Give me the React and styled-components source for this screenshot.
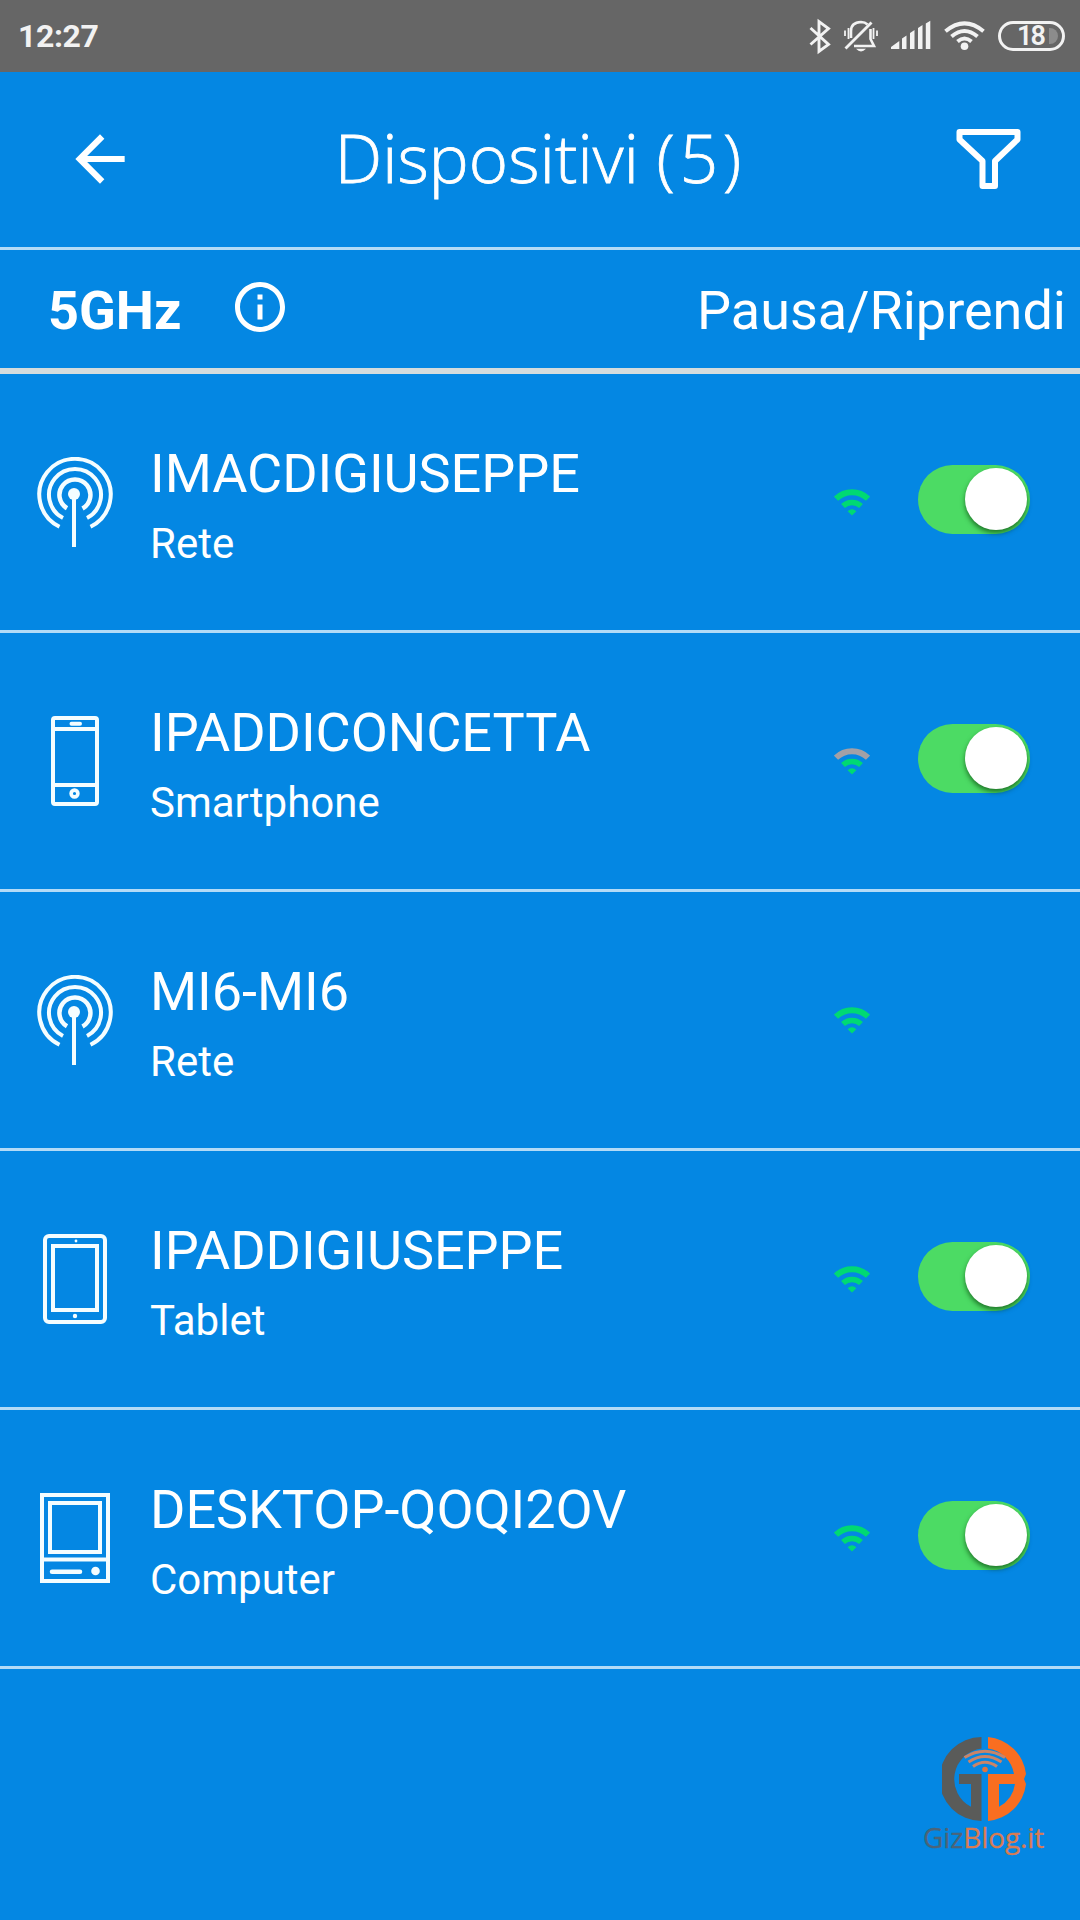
import React from "react";
import styled, { createGlobalStyle } from "styled-components";

const Global = createGlobalStyle`
  * { box-sizing: border-box; }
  body { margin: 0; background: #0487e3; }
`;

const Screen = styled.div`
  position: relative;
  width: 1080px;
  height: 1920px;
  overflow: hidden;
  background: #0487e3;
  color: #fff;
  font-family: Roboto, "Liberation Sans", sans-serif;
`;

const StatusBar = styled.div`
  display: flex;
  align-items: center;
  height: 72px;
  padding: 0 15px 0 18px;
  background: #666;
  color: #f2f2f2;
`;

const Clock = styled.span`
  font-size: 32px;
  font-weight: 700;
  line-height: 38px;
  letter-spacing: -0.4px;
  flex: 1;
`;

const StatusIcon = styled.svg`
  display: block;
  flex: none;
  width: ${(p) => p.$w}px;
  height: 72px;
  margin-right: ${(p) => p.$gap || 0}px;
`;

const Battery = styled.div`
  display: flex;
  align-items: center;
  width: 67px;
  height: 30px;
  margin-bottom: 1px;
  padding: 0 4px 0 16px;
  border: 3px solid #f2f2f2;
  border-radius: 15px;
`;

const BatteryLevel = styled.span`
  flex: 1;
  font-size: 27px;
  font-weight: 600;
  line-height: 24px;
  letter-spacing: -2px;
`;

const BatteryRest = styled.span`
  width: 9px;
  height: 16px;
  border-radius: 0 8px 8px 0;
  background: #8c8c8c;
`;

const Header = styled.header`
  display: flex;
  align-items: flex-start;
  justify-content: space-between;
  height: 178px;
  padding: 50px 58px 0 63px;
  border-bottom: 3px solid #b3dbf7;
`;

const HeaderIcon = styled.svg`
  display: block;
  width: 74px;
  height: 74px;
`;

const Title = styled.h1`
  margin: -7px 4px 0 0;
  font-family: "Open Sans", "Noto Sans", sans-serif;
  font-size: 67px;
  font-weight: 300;
  line-height: 84px;
  letter-spacing: 0.15px;
  white-space: nowrap;
  -webkit-text-stroke: 0.8px #fff;
`;

const Count = styled.span`
  letter-spacing: 5px;
`;

const Band = styled.div`
  display: flex;
  align-items: center;
  height: 124px;
  padding: 3px 14px 0 48px;
  border-bottom: 6px solid #d5dcdd;
  font-size: 54px;
  line-height: 64px;
`;

const BandName = styled.span`
  font-weight: 700;
  width: 182px;
`;

const InfoIcon = styled.svg`
  display: block;
  width: 60px;
  height: 60px;
  margin-bottom: 7px;
`;

const BandAction = styled.span`
  margin-left: auto;
`;

const List = styled.ul`
  margin: 0;
  padding: 0;
  list-style: none;
`;

const Row = styled.li`
  display: flex;
  align-items: flex-start;
  height: 259px;
  padding: 67px 50px 0 30px;
  border-bottom: 3px solid #b3dbf7;
`;

const DeviceIcon = styled.svg`
  display: block;
  flex: none;
  width: 90px;
  height: 90px;
  margin: 16px 30px 0 0;
  fill: none;
  stroke: #f4fdff;
  stroke-width: 4;
`;

const DeviceText = styled.div`
  flex: 1;
  padding-top: 1px;
`;

const DeviceName = styled.div`
  font-size: 54px;
  line-height: 64px;
  letter-spacing: -0.05px;
`;

const DeviceKind = styled.div`
  margin-top: 13px;
  font-size: 42px;
  line-height: 50px;
`;

const Signal = styled.svg`
  display: block;
  width: 36px;
  height: 27px;
  margin: 48px 48px 0 0;
  fill: none;
  stroke: #00d973;
  stroke-width: 6;
`;

const Toggle = styled.div`
  display: flex;
  justify-content: flex-end;
  width: 112px;
  height: 69px;
  margin-top: 24px;
  padding: 3px;
  border-radius: 35px;
  background: ${(p) => (p.$on ? "#4cdb64" : "transparent")};
`;

const Knob = styled.div`
  width: 62px;
  height: 62px;
  border-radius: 50%;
  background: #fff;
  box-shadow: 0 3px 5px rgba(0, 50, 0, 0.6);
`;

const Watermark = styled.div`
  position: absolute;
  left: 923px;
  top: 1736px;
  width: 126px;
`;

const WatermarkLogo = styled.svg`
  display: block;
  width: 86px;
  height: 86px;
  margin-left: 19px;
`;

const WatermarkText = styled.div`
  margin-top: -4px;
  font-family: "Open Sans", "Noto Sans", sans-serif;
  font-size: 28px;
  line-height: 38px;
  letter-spacing: -0.1px;
  color: #d97b52;
  white-space: nowrap;
  -webkit-text-stroke: 0.3px currentColor;
`;

const Grey = styled.span`
  color: #4c6478;
`;

const icons = {
  network: (
    <>
      <path d="M29.5 69.7A35.7 35.7 0 1 1 60.5 69.7" />
      <path d="M33 61A26 26 0 1 1 57 61" />
      <path d="M37 51.3A15.5 15.5 0 1 1 52.5 51.5" strokeWidth="4.5" />
      <circle cx="44" cy="37" r="6" fill="#f4fdff" stroke="none" />
      <path d="M44 37V90" />
    </>
  ),
  phone: (
    <>
      <rect x="23" y="2" width="44" height="86" rx="2" />
      <path d="M23 13H67M23 69H67" />
      <path d="M41.5 7.8H50" strokeLinecap="round" />
      <circle cx="44.5" cy="77.5" r="3.4" strokeWidth="3.6" />
    </>
  ),
  tablet: (
    <>
      <rect x="15" y="2" width="60" height="86" rx="4" />
      <rect x="23" y="12" width="44" height="64" />
      <circle cx="46" cy="7" r="1.4" fill="#f4fdff" stroke="none" />
      <circle cx="45" cy="82" r="2.2" fill="#f4fdff" stroke="none" />
    </>
  ),
  computer: (
    <>
      <rect x="12" y="2" width="66" height="86" />
      <rect x="20" y="10" width="50" height="49" />
      <path d="M12 66.5H78" />
      <path d="M22 78.8H50" strokeLinecap="round" strokeWidth="4.5" />
      <circle cx="65.5" cy="78" r="4.3" fill="#f4fdff" stroke="none" />
    </>
  ),
};

const devices = [
  { name: "IMACDIGIUSEPPE", kind: "Rete", icon: "network", on: true },
  { name: "IPADDICONCETTA", kind: "Smartphone", icon: "phone", on: true, weak: true },
  { name: "MI6-MI6", kind: "Rete", icon: "network", on: false },
  { name: "IPADDIGIUSEPPE", kind: "Tablet", icon: "tablet", on: true },
  { name: "DESKTOP-QOQI2OV", kind: "Computer", icon: "computer", on: true },
];

function DeviceRow({ device }) {
  return (
    <Row>
      <DeviceIcon viewBox="0 0 90 90">{icons[device.icon]}</DeviceIcon>
      <DeviceText>
        <DeviceName>{device.name}</DeviceName>
        <DeviceKind>{device.kind}</DeviceKind>
      </DeviceText>
      <Signal viewBox="0 0 36 27">
        <path d="M2 9.7A23 23 0 0 1 34 9.7" stroke={device.weak ? "#a3a0a6" : undefined} />
        <path d="M9 17A13 13 0 0 1 27 17" strokeWidth="5.5" />
        <path d="M13.6 22.2Q18 18.4 22.4 22.2L18 26.5Z" fill="#00d973" stroke="none" />
      </Signal>
      <Toggle $on={device.on}>{device.on && <Knob />}</Toggle>
    </Row>
  );
}

export default function App() {
  return (
    <Screen>
      <Global />
      <StatusBar>
        <Clock>12:27</Clock>
        <StatusIcon $w={22} $gap={13} viewBox="0 0 22 72" fill="none" stroke="#f2f2f2" strokeWidth="2.9">
          <path d="M1.5 28L19.5 44.5L10 51.5V21.5L19.5 28.5L1.5 44.5" />
        </StatusIcon>
        <StatusIcon $w={34} $gap={13} viewBox="0 0 34 72" fill="none" stroke="#f2f2f2" strokeWidth="2.6">
          <path d="M7 38V31Q7 22.5 17 22Q21 22 23.5 24.5M26.5 29V39L30 46H10" />
          <path d="M1.5 48.5L27.5 22.5" strokeWidth="2.8" />
          <path d="M4.5 28V39M1 30.5V36M29.5 28V39M33 30.5V36" strokeWidth="1.8" />
          <path d="M12 48.8H22Q17 54 12 48.8Z" fill="#f2f2f2" stroke="none" />
        </StatusIcon>
        <StatusIcon $w={40} $gap={13} viewBox="0 0 40 72" fill="#f2f2f2">
          <path d="M0 49V47L8.3 41V49ZM11 49V38.5L15.5 35.5V49ZM19 49V33L23.5 30V49ZM27 49V28L31.5 25V49ZM34.8 49V23.5L39.3 20.8V49Z" />
        </StatusIcon>
        <StatusIcon $w={41} $gap={13} viewBox="0 0 41 72" fill="none" stroke="#f2f2f2" strokeWidth="4">
          <path d="M1.5 31.3Q20.5 15.5 39.5 31.3" />
          <path d="M7.5 36.5Q20.5 25.5 33.5 36.5" />
          <path d="M13.5 41.5Q20.5 35.5 27.5 41.5" />
          <circle cx="20.5" cy="46.3" r="3.8" fill="#f2f2f2" stroke="none" />
        </StatusIcon>
        <Battery>
          <BatteryLevel>18</BatteryLevel>
          <BatteryRest />
        </Battery>
      </StatusBar>
      <Header>
        <HeaderIcon viewBox="0 0 24 24" fill="#fff">
          <path d="M20 11H7.83l5.59-5.59L12 4l-8 8 8 8 1.41-1.41L7.83 13H20v-2z" />
        </HeaderIcon>
        <Title>
          Dispositivi <Count>(5)</Count>
        </Title>
        <HeaderIcon viewBox="0 0 74 74" fill="none" stroke="#fff" strokeWidth="6" strokeLinejoin="round">
          <path d="M11.5 10H69.5V17.5L47 39V64H34.5V39L11.5 17.5Z" />
        </HeaderIcon>
      </Header>
      <Band>
        <BandName>5GHz</BandName>
        <InfoIcon viewBox="0 0 24 24" fill="#fff">
          <path d="M11 7h2v2h-2zm0 4h2v6h-2zm1-9C6.48 2 2 6.48 2 12s4.48 10 10 10 10-4.48 10-10S17.52 2 12 2zm0 18c-4.41 0-8-3.59-8-8s3.59-8 8-8 8 3.59 8 8-3.59 8-8 8z" />
        </InfoIcon>
        <BandAction>Pausa/Riprendi</BandAction>
      </Band>
      <List>
        {devices.map((d) => (
          <DeviceRow key={d.name} device={d} />
        ))}
      </List>
      <Watermark>
        <WatermarkLogo viewBox="0 0 86 86">
          <path d="M39.5 1V12.5A31 31 0 0 0 29 70.8V48H17V38H39.5V85A42 42 0 0 1 39.5 1Z" fill="#5a5b59" />
          <path d="M46 1A42 42 0 0 1 84 38L82 43L84 48A42 42 0 0 1 46 85V38H72A31 31 0 0 0 46 12.5ZM57 48V70.8A31 31 0 0 0 73 48Z" fill="#f96e20" fillRule="evenodd" />
          <g fill="none" stroke="#c98468" strokeWidth="3">
            <path d="M22.5 21.5Q43 9 63 21.5" />
            <path d="M26.5 26Q43 15 59.5 26" />
            <path d="M31 30.5Q43 22 55 30.5" />
          </g>
          <circle cx="43" cy="33.5" r="2.8" fill="#e0733e" />
        </WatermarkLogo>
        <WatermarkText>
          <Grey>Giz</Grey>Blog.it
        </WatermarkText>
      </Watermark>
    </Screen>
  );
}
